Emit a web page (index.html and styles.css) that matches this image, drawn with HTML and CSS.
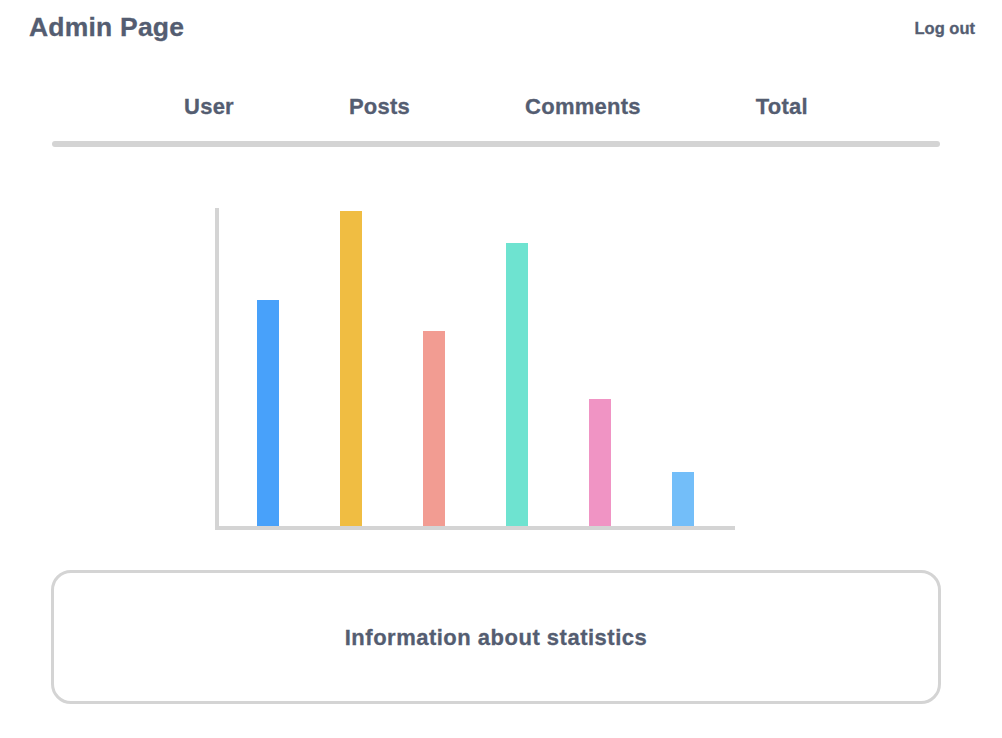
FILE: index.html
```html
<!DOCTYPE html>
<html lang="en">
<head>
<meta charset="utf-8">
<title>Admin Page</title>
<link rel="stylesheet" href="styles.css">
</head>
<body>
  <header class="topbar">
    <h1 class="title">Admin Page</h1>
    <a class="logout" href="#">Log out</a>
  </header>
  <main class="main">
    <nav class="tabs">
      <span class="tab">User</span>
      <span class="tab">Posts</span>
      <span class="tab">Comments</span>
      <span class="tab">Total</span>
    </nav>
    <div class="separator"></div>
    <div class="chart">
      <div class="bar bar-blue" style="height:226px"></div>
      <div class="bar bar-yellow" style="height:315px"></div>
      <div class="bar bar-salmon" style="height:195px"></div>
      <div class="bar bar-teal" style="height:283px"></div>
      <div class="bar bar-pink" style="height:127px"></div>
      <div class="bar bar-sky" style="height:54px"></div>
    </div>
    <section class="info">
      <p class="info-text">Information about statistics</p>
    </section>
  </main>
</body>
</html>
```
FILE: styles.css
```css
* { box-sizing: border-box; }

html, body {
  margin: 0;
  padding: 0;
  background: #ffffff;
}

body {
  font-family: "Liberation Sans", Arial, sans-serif;
  color: #545d71;
  font-weight: 700;
  -webkit-text-stroke: 0.3px #545d71;
}

.topbar {
  display: flex;
  justify-content: space-between;
  align-items: flex-start;
  height: 42px;
  padding: 12px 27px 0 29px;
}

.title {
  margin: 0;
  font-size: 26.5px;
  line-height: 30px;
  font-weight: 700;
  letter-spacing: 0.2px;
}

.logout {
  margin-top: 4px;
  font-size: 16.5px;
  line-height: 24px;
  color: #545d71;
  text-decoration: none;
}

.main {
  margin-left: 51px;
  width: 890px;
}

.tabs {
  display: flex;
  justify-content: center;
  gap: 115px;
  margin-top: 50px;
}

.tab {
  font-size: 22px;
  line-height: 30px;
  letter-spacing: 0.25px;
}

.separator {
  margin: 19px 1px 0 1px;
  height: 6px;
  border-radius: 3px;
  background: #d4d4d4;
}

.chart {
  margin: 61px 0 0 164px;
  width: 520px;
  height: 322px;
  border-left: 4px solid #d4d4d4;
  border-bottom: 4px solid #d4d4d4;
  display: flex;
  align-items: flex-end;
  gap: 61px;
  padding-left: 38px;
}

.bar {
  width: 22px;
  flex: none;
}

.bar-blue { background: #48a1fa; }
.bar-yellow { background: #f0bd42; }
.bar-salmon { background: #f29c92; }
.bar-teal { background: #6ee3d0; }
.bar-pink { background: #f094c4; }
.bar-sky { background: #73bef9; }

.info {
  margin-top: 40px;
  height: 134px;
  border: 3px solid #d4d4d4;
  border-radius: 20px;
  display: flex;
  align-items: center;
  justify-content: center;
}

.info-text {
  margin: 0;
  font-size: 22px;
  line-height: 30px;
  letter-spacing: 0.5px;
  position: relative;
  top: 1px;
}
```
